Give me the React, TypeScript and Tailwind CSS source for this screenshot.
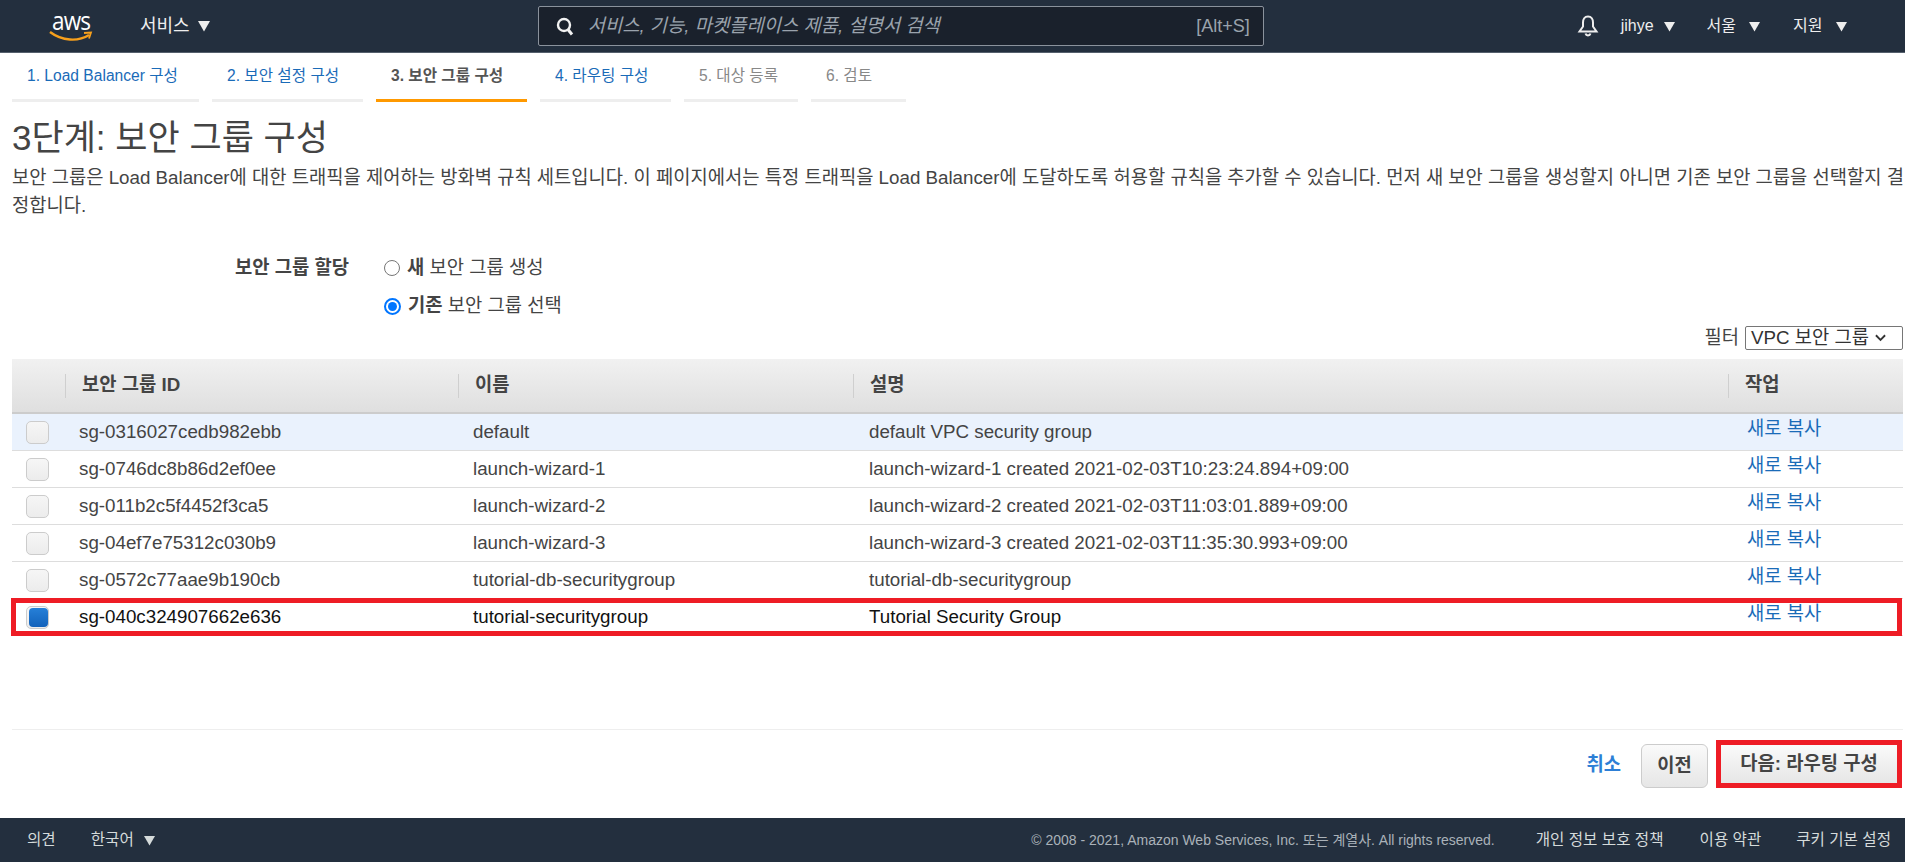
const FONT = "font-['Liberation_Sans','Noto_Sans_CJK_KR',sans-serif]";

const Tri = ({ className = "" }: { className?: string }) => (
  <svg viewBox="0 0 14 12" className={className} fill="currentColor">
    <path d="M1 1h12L7 11.5z" />
  </svg>
);

const tabs = [
  { t: "1. Load Balancer 구성", w: "w-[187px]", c: "text-[#1a6bb8]", b: "bg-[#eeeeee]" },
  { t: "2. 보안 설정 구성", w: "w-[151px]", c: "text-[#1a6bb8]", b: "bg-[#eeeeee]" },
  { t: "3. 보안 그룹 구성", w: "w-[151px]", c: "text-[#555555] font-bold", b: "bg-[#ff9900]" },
  { t: "4. 라우팅 구성", w: "w-[131px]", c: "text-[#1a6bb8]", b: "bg-[#eeeeee]" },
  { t: "5. 대상 등록", w: "w-[114px]", c: "text-[#888888]", b: "bg-[#eeeeee]" },
  { t: "6. 검토", w: "w-[95px]", c: "text-[#888888]", b: "bg-[#eeeeee]" },
];

const rows = [
  ["sg-0316027cedb982ebb", "default", "default VPC security group"],
  ["sg-0746dc8b86d2ef0ee", "launch-wizard-1", "launch-wizard-1 created 2021-02-03T10:23:24.894+09:00"],
  ["sg-011b2c5f4452f3ca5", "launch-wizard-2", "launch-wizard-2 created 2021-02-03T11:03:01.889+09:00"],
  ["sg-04ef7e75312c030b9", "launch-wizard-3", "launch-wizard-3 created 2021-02-03T11:35:30.993+09:00"],
  ["sg-0572c77aae9b190cb", "tutorial-db-securitygroup", "tutorial-db-securitygroup"],
  ["sg-040c324907662e636", "tutorial-securitygroup", "Tutorial Security Group"],
];

const cols = "grid grid-cols-[53px_393px_395px_875px_175px]";

export default function App() {
  return (
    <div className={`${FONT} h-[862px] w-[1905px] flex flex-col overflow-hidden bg-white text-[#444444]`}>
      <header className="h-[53px] shrink-0 bg-[#232f3e] border-b border-[#55606d] flex items-center text-[#eeeeee]">
        <div className="w-[49px]" />
        <div className="w-[44px] h-[38px] flex flex-col items-center mt-[-1px]">
          <span className="text-[25px] leading-[22px] tracking-[-1px] text-white font-['Open_Sans',sans-serif] mt-[2px] scale-x-[0.9]">aws</span>
          <svg viewBox="0 0 44 12" className="w-[44px] h-[12px] text-[#f7a01c]" fill="none" stroke="currentColor">
            <path d="M1 1c12 9 28 10 39 3" strokeWidth="2.4" />
            <path d="M35 2l7-.5-2 6" strokeWidth="1.8" />
          </svg>
        </div>
        <div className="w-[47px]" />
        <span className="text-[18px]">서비스</span>
        <Tri className="w-[14px] h-[12px] ml-[7px]" />
        <div className="ml-[327px] w-[726px] h-[40px] rounded-[2px] border border-[#8a929c] bg-[#1a212c] flex items-center text-[#9aa3ad]">
          <svg viewBox="0 0 20 20" className="w-[20px] h-[20px] ml-[16px] text-[#f2f2f2]" fill="none" stroke="currentColor">
            <circle cx="9" cy="9" r="6" strokeWidth="2.4" />
            <path d="M13 13.5l4 5" strokeWidth="3" />
          </svg>
          <span className="ml-[13px] italic text-[18.75px]">서비스, 기능, 마켓플레이스 제품, 설명서 검색</span>
          <span className="ml-auto mr-[13px] text-[18px]">[Alt+S]</span>
        </div>
        <svg viewBox="0 0 24 24" className="ml-[312px] w-[24px] h-[24px]" fill="none" stroke="currentColor" strokeWidth="2">
          <path d="M12 2.5c-3.5 0-5 3-5 6v4l-3.5 5h17L17 12.500v-4c0-3-1.500-6-5-6z" />
          <path d="M9.500 19.500a2.600 2.600 0 005 0" />
        </svg>
        <span className="ml-[21px] text-[16px]">jihye</span>
        <Tri className="w-[13px] h-[11px] ml-[9px]" />
        <span className="ml-[31px] text-[16px]">서울</span>
        <Tri className="w-[13px] h-[11px] ml-[12px]" />
        <span className="ml-[32px] text-[16px]">지원</span>
        <Tri className="w-[13px] h-[11px] ml-[12px]" />
      </header>

      <main className="flex-1 min-h-0 flex flex-col pl-[12px] pr-[2px]">
        <nav className="flex gap-[13px] h-[49px] shrink-0">
          {tabs.map((t) => (
            <div key={t.t} className={`${t.w} flex flex-col`}>
              <div className={`flex-1 flex items-center pl-[15px] text-[15.6px] ${t.c}`}>{t.t}</div>
              <div className={`h-[3px] ${t.b}`} />
            </div>
          ))}
        </nav>
        <h1 className="mt-[17px] text-[35px] leading-[38px] font-normal">3단계: 보안 그룹 구성</h1>
        <p className="mt-[7px] text-[18.75px] leading-[28px] w-[1893px]">
          보안 그룹은 Load Balancer에 대한 트래픽을 제어하는 방화벽 규칙 세트입니다. 이 페이지에서는 특정 트래픽을 Load Balancer에 도달하도록 허용할 규칙을 추가할 수 있습니다. 먼저 새 보안 그룹을 생성할지 아니면 기존 보안 그룹을 선택할지 결정합니다.
        </p>

        <div className="mt-[29px] flex text-[18.75px]">
          <div className="w-[337px] pr-[0px] text-right font-bold leading-[38px]">보안 그룹 할당</div>
          <div className="ml-[35px] flex flex-col">
            <label className="flex items-center h-[38px]">
              <span className="w-[16px] h-[16px] rounded-full border border-[#767676] bg-white" />
              <span className="ml-[7px]"><b>새</b> 보안 그룹 생성</span>
            </label>
            <label className="flex items-center h-[38px]">
              <span className="w-[17px] h-[17px] rounded-full border-2 border-[#0075ff] bg-white flex items-center justify-center">
                <span className="w-[9px] h-[9px] rounded-full bg-[#0075ff]" />
              </span>
              <span className="ml-[7px]"><b>기존</b> 보안 그룹 선택</span>
            </label>
          </div>
        </div>

        <div className="mt-[1px] h-[24px] flex items-center justify-end text-[18.75px] shrink-0">
          <span>필터</span>
          <div className="ml-[6px] w-[158px] h-[24px] border border-[#767676] rounded-[2px] flex items-center pl-[5px] text-[18.75px] text-[#333333] whitespace-nowrap overflow-hidden">
            VPC 보안 그룹
            <svg viewBox="0 0 12 8" className="w-[11px] h-[8px] ml-[6px] shrink-0" fill="none" stroke="currentColor" strokeWidth="2"><path d="M1 1l5 5 5-5" /></svg>
          </div>
        </div>

        <div className="mt-[9px] w-[1891px]">
          <div className={`${cols} h-[55px] bg-gradient-to-b from-[#f1f1f1] to-[#dfdfdf] border-b-2 border-[#cccccc] font-bold text-[18.75px]`}>
            {["", "보안 그룹 ID", "이름", "설명", "작업"].map((h, i) => (
              <div key={h} className="flex items-center">
                {i > 0 && <div className="w-px h-[24px] bg-[#cfcfcf] mr-[16px]" />}
                {h}
              </div>
            ))}
          </div>
          {rows.map((r, i) => {
            const sel = i === 5;
            return (
              <div key={r[0]} className={`${cols} relative h-[37px] border-b border-[#dddddd] text-[18.75px] ${i === 0 ? "bg-[#eaf2fd]" : "bg-white"} ${sel ? "text-[#111111]" : ""}`}>
                <div className="flex items-center pl-[14px]">
                  <span className="w-[23px] h-[23px] rounded-[5px] border border-[#cccccc] bg-gradient-to-b from-[#f6f6f6] to-[#ececec] flex items-center justify-center">
                    {sel && <span className="w-[19px] h-[19px] rounded-[4px] bg-gradient-to-b from-[#2680d8] to-[#1262bb] ml-[1px]" />}
                  </span>
                </div>
                <div className="flex items-center pl-[14px]">{r[0]}</div>
                <div className="flex items-center pl-[15px]">{r[1]}</div>
                <div className="flex items-center pl-[16px]">{r[2]}</div>
                <div className="pl-[19px] pt-[1px] leading-[28px] text-[#1a6bb8]">새로 복사</div>
                {sel && <div className="absolute left-[-1px] right-[1px] top-[-1px] bottom-[-1px] border-[5px] border-[#ee1c25] pointer-events-none" />}
              </div>
            );
          })}
        </div>

        <div className="mt-auto border-t border-[#eeeeee] h-[89px] shrink-0 flex items-start justify-end pr-[1px]">
          <span className="mt-[21px] text-[18.75px] font-bold text-[#2d7fd6]">취소</span>
          <button className="ml-[20px] mt-[14px] w-[67px] h-[44px] rounded-[6px] border border-[#cccccc] bg-gradient-to-b from-[#fafafa] to-[#e6e6e6] font-bold text-[18.75px]">이전</button>
          <div className="ml-[8px] mt-[10px] w-[186px] h-[48px] border-[5px] border-[#ee1c25]">
            <button className="w-full h-full bg-gradient-to-b from-[#fafafa] to-[#e6e6e6] font-bold text-[18.75px]">다음: 라우팅 구성</button>
          </div>
        </div>
      </main>

      <footer className="h-[44px] shrink-0 bg-[#232f3e] flex items-center text-[#d5dbdb] text-[15.6px]">
        <span className="ml-[27px]">의견</span>
        <span className="ml-[35px]">한국어</span>
        <Tri className="w-[13px] h-[11px] ml-[9px]" />
        <span className="ml-auto text-[14px] text-[#aab2b9]">© 2008 - 2021, Amazon Web Services, Inc. 또는 계열사. All rights reserved.</span>
        <span className="ml-[41px]">개인 정보 보호 정책</span>
        <span className="ml-[36px]">이용 약관</span>
        <span className="ml-[35px] mr-[14px]">쿠키 기본 설정</span>
      </footer>
    </div>
  );
}
